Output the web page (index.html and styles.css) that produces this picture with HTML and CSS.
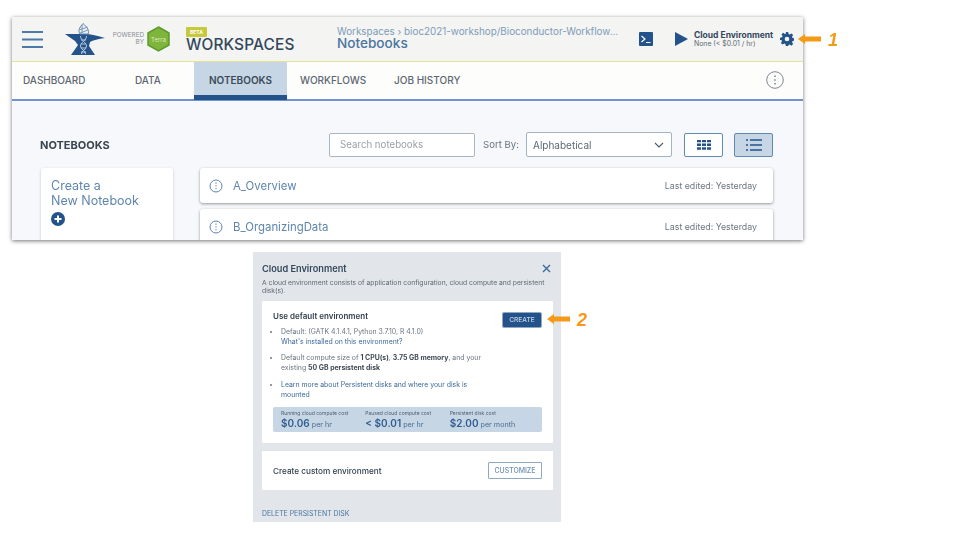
FILE: index.html
```html
<!DOCTYPE html>
<html lang="en">
<head>
<meta charset="utf-8">
<title>Notebooks</title>
<link rel="stylesheet" href="styles.css">
</head>
<body>
<main class="canvas">
  <section class="shot">
    <header class="topbar">
      <svg class="burger" viewBox="0 0 21 17"><path d="M0 1h21M0 8.500h21M0 16h21"/></svg>
      <svg class="logo" viewBox="0 0 40 33">
        <path fill="#24528a" d="M0 11H19C26 11 33 13 40 15C33 16 28 17 25 19L24 23L30 32H6L13 22L10 18Z"/>
        <path fill="#e8eef4" stroke="#5f86ad" stroke-width="1" d="M18 0.500C14 5 13 8 15 11H23C25 8 22 4 18 0.500Z"/>
        <path fill="none" stroke="#5f86ad" stroke-width=".8" d="M14.500 7l8-3M15 10l8-3M17 2v8"/>
        <path fill="none" stroke="#c6d6e5" stroke-width=".9" d="M15.500 13c0 5 6 6 6 10s-5 4-5 8M21.500 13c0 5-6 6-6 10s5 4 5 8M16 17h5M16 21h5M16 25h5M16 29h5"/>
      </svg>
      <div class="powered"><span>POWERED</span><span>BY</span></div>
      <svg class="hex" viewBox="0 0 23 26">
        <path fill="#7fb53a" stroke="#5c9a2c" stroke-width="1.500" d="M11.500 1 22 7v12l-10.500 6L1 19V7z"/>
        <text class="hex-text" x="11.500" y="15.500" text-anchor="middle">Terra</text>
      </svg>
      <div class="brand"><span class="beta">BETA</span><span class="brand-name">WORKSPACES</span></div>
      <div class="crumbs">
        <div class="crumb-path">Workspaces › bioc2021-workshop/Bioconductor-Workflow...</div>
        <div class="crumb-title">Notebooks</div>
      </div>
      <svg class="terminal" viewBox="0 0 14 14"><rect width="14" height="14" rx="1" fill="#24528a"/><path d="M2.500 4 6 7l-3.500 3M7 10.500h4.500" fill="none" stroke="#fff" stroke-width="1.200"/></svg>
      <svg class="play" viewBox="0 0 13 14"><path d="M0 0l13 7-13 7z" fill="#24528a"/></svg>
      <div class="env"><div class="env-name">Cloud Environment</div><div class="env-cost">None (&lt; $0.01 / hr)</div></div>
      <svg class="gear" viewBox="0 0 24 24"><path fill="#24528a" fill-rule="evenodd" d="M10 0h4l.7 3.400 2 .9L19.700 2.400l2.800 2.900-1.900 2.900.9 2 3.500.7v4l-3.500.7-.9 2 1.900 2.900-2.800 2.900-3-1.900-2 .9L14 24h-4l-.7-3.400-2-.9-3 1.900-2.800-2.900 1.900-2.900-.9-2L0 13.900v-4l3.500-.7.9-2-1.900-2.900 2.800-2.900 3 1.900 2-.9zM12 8a4 4 0 1 0 0 8 4 4 0 0 0 0-8z"/></svg>
    </header>
    <nav class="tabs">
      <a class="tab tab-dash">DASHBOARD</a>
      <a class="tab tab-data">DATA</a>
      <a class="tab tab-active">NOTEBOOKS</a>
      <a class="tab tab-flows">WORKFLOWS</a>
      <a class="tab tab-jobs">JOB HISTORY</a>
      <span class="kebab"><svg viewBox="0 0 18 18"><circle cx="9" cy="9" r="8.300" fill="none" stroke="#7d8994"/><path d="M9 4.500v1.600M9 8.200v1.600M9 11.900v1.600" stroke="#6b7883" stroke-width="1.400"/></svg></span>
    </nav>
    <div class="content">
      <div class="toolbar">
        <h2 class="section-title">NOTEBOOKS</h2>
        <div class="search">Search notebooks</div>
        <span class="sort-label">Sort By:</span>
        <div class="select"><span>Alphabetical</span><svg viewBox="0 0 10 6"><path d="M1 1l4 4 4-4" fill="none" stroke="#4c5a68" stroke-width="1.100"/></svg></div>
        <button class="view-btn"><svg viewBox="0 0 14 10"><path fill="#24528a" d="M0 0h4v2.500H0zM5 0h4v2.500H5zM10 0h4v2.500h-4zM0 3.700h4v2.500H0zM5 3.700h4v2.500H5zM10 3.700h4v2.500h-4zM0 7.400h4V10H0zM5 7.400h4V10H5zM10 7.400h4V10h-4z" transform="translate(0 -.200)"/></svg></button>
        <button class="view-btn view-on"><svg viewBox="0 0 16 12"><path d="M0 1h2M4 1h12M0 6h2M4 6h12M0 11h2M4 11h12" stroke="#24528a" stroke-width="1.700"/></svg></button>
      </div>
      <div class="nb-layout">
        <div class="create-card">
          <div class="create-text">Create a<br>New Notebook</div>
          <svg class="plus" viewBox="0 0 14 14"><circle cx="7" cy="7" r="7" fill="#24528a"/><path d="M3.500 7h7M7 3.500v7" stroke="#fff" stroke-width="2"/></svg>
        </div>
        <div class="nb-list">
          <div class="nb-card">
            <svg class="nb-info" viewBox="0 0 14 14"><circle cx="7" cy="7" r="6" fill="none" stroke="#5f86ad"/><path d="M7 3.500v1.300M7 6.200v1.300M7 8.900v1.300" stroke="#5f86ad"/></svg>
            <span class="nb-name">A_Overview</span><span class="nb-date">Last edited: Yesterday</span>
          </div>
          <div class="nb-card">
            <svg class="nb-info" viewBox="0 0 14 14"><circle cx="7" cy="7" r="6" fill="none" stroke="#5f86ad"/><path d="M7 3.500v1.300M7 6.200v1.300M7 8.900v1.300" stroke="#5f86ad"/></svg>
            <span class="nb-name">B_OrganizingData</span><span class="nb-date">Last edited: Yesterday</span>
          </div>
        </div>
      </div>
    </div>
  </section>

  <section class="panel">
    <div class="panel-head">
      <h3 class="panel-title">Cloud Environment</h3>
      <svg class="close" viewBox="0 0 9 9"><path d="M1 1l7 7M8 1L1 8" stroke="#3c6a98" stroke-width="1.400"/></svg>
    </div>
    <p class="panel-desc">A cloud environment consists of application configuration, cloud compute and persistent disk(s).</p>
    <div class="env-card">
      <div class="env-top">
        <div class="env-main">
          <h4 class="env-heading">Use default environment</h4>
          <ul class="env-list">
            <li>Default: (GATK 4.1.4.1, Python 3.7.10, R 4.1.0)<br><a>What's installed on this environment?</a></li>
            <li>Default compute size of <b>1 CPU(s)</b>, <b>3.75 GB memory</b>, and your<br>existing <b>50 GB persistent disk</b></li>
            <li><a>Learn more about Persistent disks and where your disk is<br>mounted</a></li>
          </ul>
        </div>
        <button class="create-btn">CREATE</button>
      </div>
      <div class="costs">
        <div class="cost"><div class="cost-label">Running cloud compute cost</div><div class="cost-value"><b>$0.06</b> per hr</div></div>
        <div class="cost"><div class="cost-label">Paused cloud compute cost</div><div class="cost-value"><b>&lt; $0.01</b> per hr</div></div>
        <div class="cost"><div class="cost-label">Persistent disk cost</div><div class="cost-value"><b>$2.00</b> per month</div></div>
      </div>
    </div>
    <div class="custom-card"><span>Create custom environment</span><button class="custom-btn">CUSTOMIZE</button></div>
    <a class="delete">DELETE PERSISTENT DISK</a>
  </section>

  <svg class="arrow arrow-one" viewBox="0 0 23 10"><path d="M0 5l7-5v2.500h16v5H7V10z" fill="#f59a16"/></svg>
  <span class="step step-one">1</span>
  <svg class="arrow arrow-two" viewBox="0 0 23 10"><path d="M0 5l7-5v2.500h16v5H7V10z" fill="#f59a16"/></svg>
  <span class="step step-two">2</span>
</main>
</body>
</html>
```
FILE: styles.css
```css
* { box-sizing: border-box; }
html, body { margin: 0; background: #fff; }
body { font-family: Inter, "Liberation Sans", sans-serif; color: #4d5a66; }
.canvas { position: relative; width: 960px; height: 540px; overflow: hidden; padding: 17px 0 0 12px; }

.shot { width: 791px; height: 223px; display: flex; flex-direction: column; overflow: hidden; background: #f6f8fb; box-shadow: 0 1px 4px rgba(0,0,0,.55); filter: blur(.3px); }
.topbar { height: 45px; flex: none; display: flex; align-items: center; background: #f4f4f2; border-bottom: 1.500px solid #e6e38e; padding-left: 10px; }
.burger { width: 21px; height: 17px; margin-top: 1px; fill: none; stroke: #4a7aa5; stroke-width: 1.800; }
.logo { width: 40px; height: 33px; margin-left: 22px; }
.powered { width: 32px; margin-left: 7px; display: flex; flex-direction: column; align-items: flex-end; font-size: 6.300px; line-height: 7px; color: #8b9094; }
.hex { width: 23px; height: 26px; margin-left: 3px; }
.hex-text { font-size: 6px; fill: #dcefc0; }
.brand { display: flex; flex-direction: column; align-items: flex-start; margin-left: 16px; width: 151px; margin-top: 1px; }
.beta { background: #c7c93c; color: #fff; font-size: 5px; font-weight: 700; line-height: 10px; padding: 0 4px; border-radius: 1px; }
.brand-name { font-size: 15.400px; line-height: 16px; color: #33475c; letter-spacing: .15px; font-weight: 500; }
.crumbs { width: 302px; margin-bottom: 3px; }
.crumb-path { font-size: 9.850px; line-height: 12.500px; color: #7d9bb9; white-space: nowrap; }
.crumb-title { font-size: 13.600px; line-height: 13px; color: #4a75a0; font-weight: 500; }
.terminal { width: 14px; height: 14px; }
.play { width: 13px; height: 14px; margin-left: 22px; }
.env { width: 86px; margin-left: 6px; }
.env-name { font-size: 8.500px; line-height: 9px; font-weight: 700; color: #33475c; white-space: nowrap; }
.env-cost { font-size: 6.900px; line-height: 7px; color: #5d6a76; white-space: nowrap; }
.gear { width: 14px; height: 14px; }

.tabs { height: 39px; flex: none; display: flex; align-items: stretch; background: #fdfdfb; border-bottom: 2px solid #6f92d2; font-size: 10px; font-weight: 500; color: #5d6872; }
.tab { display: flex; align-items: center; white-space: nowrap; padding-bottom: 2px; }
.tab-dash { margin-left: 11px; width: 112px; }
.tab-data { width: 59px; }
.tab-active { width: 93px; justify-content: center; background: #c6d6e5; border-bottom: 5px solid #24528a; padding: 3px 0 0; color: #3b4b5a; margin-bottom: -1px; font-weight: 600; }
.tab-flows { margin-left: 13px; width: 94px; }
.tab-jobs { width: 364px; }
.kebab { display: flex; align-items: center; margin-left: 8px; padding-bottom: 2px; }
.kebab svg { width: 18px; height: 18px; }

.content { flex: 1; min-height: 0; padding: 31px 30px 0 28px; }
.toolbar { display: flex; align-items: center; height: 25px; }
.section-title { margin: 0; width: 289px; font-size: 11px; font-weight: 700; color: #3a4551; }
.search { width: 146px; height: 24px; line-height: 22px; padding-left: 10px; background: #fff; border: 1px solid #a9b7c5; border-radius: 2px; font-size: 9.700px; color: #9aa1a8; }
.sort-label { margin-left: 8px; width: 43px; font-size: 9.600px; color: #6a7580; }
.select { width: 146px; height: 25px; display: flex; align-items: center; justify-content: space-between; padding: 0 7px 0 6px; background: #fff; border: 1px solid #a2b4c6; border-radius: 2px; font-size: 10px; color: #5d6872; }
.select svg { width: 10px; height: 6px; }
.view-btn { width: 39px; height: 24px; margin-left: 12px; padding: 0; display: flex; align-items: center; justify-content: center; background: #fff; border: 1px solid #5f8ab3; border-radius: 2px; }
.view-btn svg { width: 14px; height: 10px; }
.view-btn + .view-btn { margin-left: 11px; }
.view-on { background: #c6d6e5; }
.view-on svg { width: 16px; height: 12px; }

.nb-layout { display: flex; margin-top: 11px; padding-left: 1px; gap: 27px; }
.create-card { width: 132px; height: 80px; flex: none; background: #fff; border-radius: 3px; box-shadow: 0 1px 3px rgba(0,0,0,.2); padding: 11px 10px; }
.create-text { font-size: 12.500px; line-height: 14.500px; color: #5f86ad; }
.plus { display: block; width: 14px; height: 14px; margin-top: 4px; }
.nb-list { flex: 1; display: flex; flex-direction: column; gap: 6px; }
.nb-card { height: 35px; display: flex; align-items: center; padding: 0 16px 0 9px; background: #fff; border-radius: 3px; box-shadow: 0 1px 3px rgba(0,0,0,.4); }
.nb-info { width: 14px; height: 14px; }
.nb-name { margin-left: 10px; font-size: 11.400px; color: #5f86ad; }
.nb-date { margin-left: auto; font-size: 8.800px; color: #6c7680; }

.panel { width: 308px; height: 270px; margin: 12px 0 0 241px; padding: 0 9px; background: #e2e6ea; display: flex; flex-direction: column; filter: blur(.35px); }
.panel-head { display: flex; align-items: center; justify-content: space-between; height: 16px; margin-top: 8px; }
.panel-title { margin: 0; font-size: 9.200px; font-weight: 600; color: #33475c; }
.close { width: 9px; height: 9px; margin-right: 1px; }
.panel-desc { margin: 1px 0 0; font-size: 6.750px; line-height: 7.500px; color: #5d6872; width: 293px; height: 18px; padding-top: 2px; }
.env-card { margin-top: 6px; width: 291px; height: 142px; background: #fff; border-radius: 1px; padding: 10px 11px 0; }
.env-top { display: flex; justify-content: space-between; height: 96px; }
.env-main { width: 225px; }
.env-heading { margin: 0; font-size: 8px; line-height: 10px; font-weight: 600; color: #33414f; }
.env-list { margin: 6px 0 0; padding: 0 0 0 8px; font-size: 6.900px; line-height: 9.700px; color: #6a7580; }
.env-list li { margin-bottom: 7px; white-space: nowrap; }
.env-list a { color: #3b6a9a; }
.env-list b { color: #3f4a55; }
.create-btn { width: 40px; height: 16px; margin-top: 1px; padding: 0; border: 1px solid #8fa9c2; border-radius: 2px; background: #24528a; color: #c6d6e5; font: 500 6.600px Inter, "Liberation Sans", sans-serif; }
.costs { height: 25px; display: flex; padding: 3px 8px 0; background: #c6d6e5; border-radius: 2px; color: #4a6c90; }
.cost { width: 85px; white-space: nowrap; }
.cost-label { font-size: 5px; line-height: 6px; color: #4d5f70; }
.cost-value { font-size: 7.200px; line-height: 13px; margin-top: 1px; }
.cost-value b { font-size: 10px; color: #2f5d8f; font-weight: 600; }
.custom-card { margin-top: 8px; width: 291px; height: 39px; display: flex; align-items: center; justify-content: space-between; padding: 0 11px; background: #fff; font-size: 8.200px; font-weight: 500; color: #33414f; }
.custom-btn { width: 54px; height: 17px; padding: 0; background: #fff; border: 1px solid #8fa9c2; border-radius: 1px; color: #6f8db0; font: 500 6.900px Inter, "Liberation Sans", sans-serif; }
.delete { margin-top: 19px; font-size: 6.900px; line-height: 9px; color: #4a75a0; }

.arrow { position: absolute; width: 23px; height: 10px; }
.arrow-one { left: 798px; top: 34px; }
.arrow-two { left: 547px; top: 314px; }
.step { position: absolute; font: italic 700 18px/18px "Liberation Sans", sans-serif; color: #f59a16; }
.step-one { left: 828px; top: 31px; }
.step-two { left: 577px; top: 311px; }
```
